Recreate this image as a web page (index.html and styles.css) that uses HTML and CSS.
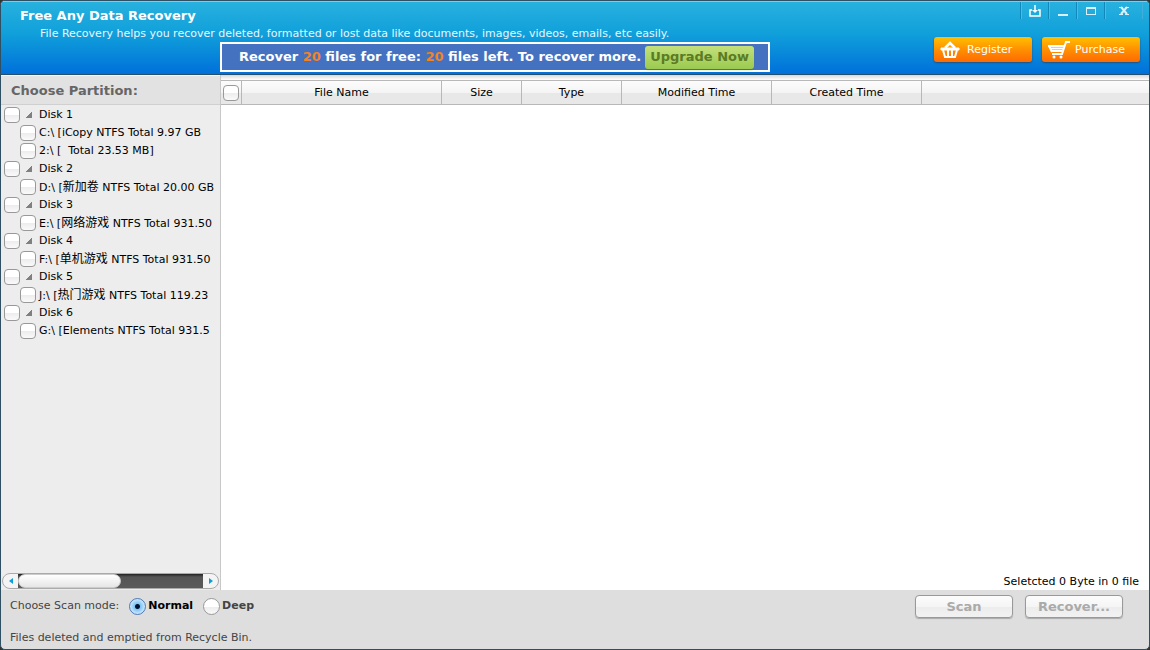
FILE: index.html
```html
<!DOCTYPE html>
<html lang="en">

<head>
    <meta charset="UTF-8">
    <meta name="viewport" content="width=device-width, initial-scale=1.0">
    <title>Free Any Data Recovery</title>
    <link rel="stylesheet" href="styles.css">
</head>

<body>
    <div class="window">
        <header class="header">
            <div class="intro">
                <h1>Free Any Data Recovery</h1>
                <p>File Recovery helps you recover deleted, formatted or lost data like documents, images, videos, emails, etc easily.</p>
                <div class="notice">
                    <span>Recover <em>20</em> files for free: <em>20</em> files left. To recover more.</span>
                    <button type="button" class="upgrade">Upgrade Now</button>
                </div>
            </div>
            <div class="tools">
                <div class="controls">
                    <button type="button" aria-label="Update">
                        <svg width="12" height="12" viewBox="0 0 12 12" fill="none" stroke="#fff"><path d="M3 5H1V11H11V5H9" stroke-width="1.500"/><path d="M6 0V6" stroke-width="1.500"/><path d="M3 5H9L6 8Z" fill="#fff" stroke="none"/></svg>
                    </button>
                    <button type="button" aria-label="Minimize">
                        <svg width="12" height="12" viewBox="0 0 12 12"><path d="M1 9H11V11H1Z" fill="#d8f0fa"/></svg>
                    </button>
                    <button type="button" aria-label="Maximize">
                        <svg width="12" height="12" viewBox="0 0 12 12"><path d="M1 2H11V10H1ZM2 4V9H10V4Z" fill="#d8f0fa" fill-rule="evenodd"/></svg>
                    </button>
                    <button type="button" class="close" aria-label="Close">
                        <svg width="12" height="12" viewBox="0 0 12 12" fill="none" stroke="#d8f0fa"><path d="M3 2L9 9M9 2L3 9" stroke-width="2"/><path d="M1 2.500H5M7 2.500H11M1 9.500H5M7 9.500H11"/></svg>
                    </button>
                </div>
                <div class="orders">
                    <button type="button" class="order">
                        <svg width="20" height="18" viewBox="0 0 20 18" fill="none" stroke="#fff"><path d="M5 7L10 2L15 7" stroke-width="2.500"/><path d="M1 7H19V9H1Z" fill="#fff"/><path d="M3 9L5 16H15L17 9M8 9V16M12 9V16" stroke-width="2"/></svg>
                        Register
                    </button>
                    <button type="button" class="order">
                        <svg width="22" height="18" viewBox="0 0 22 18" fill="none" stroke="#fff"><path d="M22 1H18L14 13H4" stroke-width="2"/><path d="M0 5H16M2 7.500H15M3 10H14" stroke-width="2"/><path d="M1 5L4 11" stroke-width="2"/><circle cx="6" cy="16" r="1.500" fill="#fff" stroke="none"/><circle cx="13" cy="16" r="1.500" fill="#fff" stroke="none"/></svg>
                        Purchase
                    </button>
                </div>
            </div>
        </header>

        <main class="main">
            <aside class="side">
                <h2>Choose Partition:</h2>
                <ul class="tree">
                    <li class="disk"><input type="checkbox" id="d1"><i></i><label for="d1">Disk 1</label></li>
                    <li class="part"><input type="checkbox" id="pc"><label for="pc">C:\ [iCopy NTFS Total 9.97 GB</label></li>
                    <li class="part"><input type="checkbox" id="p2"><label for="p2">2:\ [&nbsp; Total 23.53 MB]</label></li>
                    <li class="disk"><input type="checkbox" id="d2"><i></i><label for="d2">Disk 2</label></li>
                    <li class="part"><input type="checkbox" id="pd"><label for="pd">D:\ [<span class="cjk">新加卷</span> NTFS Total 20.00 GB</label></li>
                    <li class="disk"><input type="checkbox" id="d3"><i></i><label for="d3">Disk 3</label></li>
                    <li class="part"><input type="checkbox" id="pe"><label for="pe">E:\ [<span class="cjk">网络游戏</span> NTFS Total 931.50</label></li>
                    <li class="disk"><input type="checkbox" id="d4"><i></i><label for="d4">Disk 4</label></li>
                    <li class="part"><input type="checkbox" id="pf"><label for="pf">F:\ [<span class="cjk">单机游戏</span> NTFS Total 931.50</label></li>
                    <li class="disk"><input type="checkbox" id="d5"><i></i><label for="d5">Disk 5</label></li>
                    <li class="part"><input type="checkbox" id="pj"><label for="pj">J:\ [<span class="cjk">热门游戏</span> NTFS Total 119.23</label></li>
                    <li class="disk"><input type="checkbox" id="d6"><i></i><label for="d6">Disk 6</label></li>
                    <li class="part"><input type="checkbox" id="pg"><label for="pg">G:\ [Elements NTFS Total 931.5</label></li>
                </ul>
                <div class="scroll">
                    <button type="button" aria-label="Scroll left"><svg width="4" height="6" viewBox="0 0 4 6"><path d="M4 0V6L0 3Z" fill="#0b9fd8"/></svg></button>
                    <div class="track"><div class="thumb"></div></div>
                    <button type="button" aria-label="Scroll right"><svg width="4" height="6" viewBox="0 0 4 6"><path d="M0 0V6L4 3Z" fill="#0b9fd8"/></svg></button>
                </div>
            </aside>

            <section class="files">
                <table>
                    <thead>
                        <tr>
                            <th class="pick"><input type="checkbox" aria-label="Select all"></th>
                            <th class="name">File Name</th>
                            <th class="size">Size</th>
                            <th class="type">Type</th>
                            <th class="time">Modified Time</th>
                            <th class="time">Created Time</th>
                            <th></th>
                        </tr>
                    </thead>
                    <tbody></tbody>
                </table>
                <p class="total">Seletcted 0 Byte in 0 file</p>
            </section>
        </main>

        <footer class="footer">
            <div class="mode">
                <span>Choose Scan mode:</span>
                <input type="radio" name="mode" id="normal" checked><label for="normal" class="on">Normal</label>
                <input type="radio" name="mode" id="deep"><label for="deep">Deep</label>
            </div>
            <div class="actions">
                <button type="button" disabled>Scan</button>
                <button type="button" disabled>Recover...</button>
            </div>
            <p>Files deleted and emptied from Recycle Bin.</p>
        </footer>
    </div>
</body>

</html>
```

FILE: styles.css
```css
* {
    margin: 0;
    padding: 0;
    box-sizing: border-box;
}

body {
    background-color: #333;
    font: 11px/18px "DejaVu Sans", Verdana, "Noto Sans CJK SC", sans-serif;
    color: #000;
}

button,
input {
    font: inherit;
    appearance: none;
}

button {
    border: none;
    background: none;
}

li {
    list-style: none;
}

svg {
    display: block;
    flex: none;
}

.window {
    display: flex;
    flex-direction: column;
    height: 100vh;
    border: 1px solid #2f4f62;
    border-radius: 5px;
    overflow: hidden;
    background-color: #dedede;
}

/* header */
.header {
    display: flex;
    justify-content: space-between;
    height: 74px;
    border-top: 1px solid #7ccdea;
    border-bottom: 1px solid #24506e;
    background: linear-gradient(#27b1de, #109fda 45%, #0070da);
    color: #fff;
}

.intro h1 {
    padding: 4px 0 0 19px;
    font-size: 13px;
    line-height: 20px;
}

.intro p {
    padding-left: 39px;
    line-height: 16px;
    color: #e6f6ff;
}

.notice {
    display: flex;
    align-items: center;
    width: 550px;
    height: 30px;
    margin-left: 219px;
    padding-left: 17px;
    border: 2px solid #fff;
    background-color: #4472c0;
    font-size: 13px;
    font-weight: bold;
    white-space: nowrap;
}

.notice em {
    font-style: normal;
    color: #f5821f;
}

.upgrade {
    height: 23px;
    margin-left: 4px;
    padding: 0 5px;
    border-radius: 3px;
    background: linear-gradient(#c3e07c, #9bca50);
    box-shadow: 0 1px 1px #4a7a50;
    color: #5b7b26;
}

.tools {
    display: flex;
    flex-direction: column;
    align-items: flex-end;
    gap: 18px;
}

.controls {
    display: flex;
    height: 17px;
    margin-right: 6px;
    border-right: 1px solid #3fb0dc;
}

.controls button {
    display: flex;
    justify-content: center;
    align-items: center;
    width: 28px;
    border-left: 1px solid #1288b8;
    box-shadow: inset 1px 0 #4abce2;
}

.controls .close {
    width: 38px;
}

.orders {
    display: flex;
    gap: 10px;
    padding-right: 9px;
}

.order {
    display: flex;
    align-items: center;
    gap: 7px;
    width: 98px;
    height: 25px;
    padding-left: 6px;
    border-radius: 3px;
    background: linear-gradient(#ffc000, #ff9000 50%, #ff6a00);
    box-shadow: 0 1px 2px #1f4f80;
    color: #fff;
}

.order + .order {
    gap: 5px;
}

/* partitions and file list */
.main {
    display: flex;
    flex: 1;
    min-height: 0;
}

.side {
    display: flex;
    flex-direction: column;
    width: 220px;
    border-right: 1px solid #c8c8c8;
    background-color: #ededed;
}

.side h2 {
    height: 30px;
    padding-left: 10px;
    border-top: 1px solid #f5f5f5;
    border-bottom: 1px solid #d0d0d0;
    background-color: #e2e2e2;
    font-size: 13px;
    line-height: 29px;
    color: #666;
}

.tree {
    flex: 1;
    padding-top: 1px;
    overflow: hidden;
}

.tree li {
    display: flex;
    align-items: center;
    height: 18px;
    padding-left: 3px;
    white-space: nowrap;
}

.tree .part {
    padding-left: 19px;
}

.part label {
    padding-left: 3px;
}

.cjk {
    font-size: 12px;
}

.disk i {
    width: 6px;
    height: 6px;
    margin: 0 7px 0 6px;
    background: linear-gradient(to bottom right, transparent 50%, #808080 50%);
}

input[type="checkbox"] {
    flex: none;
    width: 16px;
    height: 16px;
    border: 1px solid #999;
    border-radius: 4px;
    background: linear-gradient(#fff 50%, #ececec 50%, #fafafa);
}

.scroll {
    display: flex;
    height: 16px;
    margin: 0 1px 1px;
    border: 1px solid #aaa;
    border-radius: 8px;
    overflow: hidden;
    background-color: #f4f4f4;
}

.scroll button {
    display: flex;
    justify-content: center;
    align-items: center;
    width: 15px;
}

.track {
    flex: 1;
    background: linear-gradient(#222, #555 3px, #5a5a5a);
}

.thumb {
    width: 103px;
    height: 14px;
    border: 1px solid #ccc;
    border-radius: 7px;
    background: linear-gradient(#fff, #e6e6e6);
}

.files {
    display: flex;
    flex: 1;
    flex-direction: column;
    justify-content: space-between;
    padding-top: 5px;
    background: linear-gradient(#d8d8d8, #fff 5px);
}

table {
    width: 100%;
    table-layout: fixed;
    border-spacing: 0;
}

th {
    height: 25px;
    border: 1px solid #b8b8b8;
    border-left: none;
    background: linear-gradient(#fcfcfc, #f4f4f4 50%, #e8e8e8 50%);
    font-weight: normal;
}

th:last-child {
    border-right: none;
}

.pick {
    width: 21px;
}

.pick input {
    display: block;
    margin: 0 auto;
}

.name {
    width: 200px;
}

.size {
    width: 80px;
}

.type {
    width: 100px;
}

.time {
    width: 150px;
}

.total {
    padding-right: 10px;
    line-height: 16px;
    text-align: right;
}

/* footer */
.footer {
    display: grid;
    grid-template-columns: 1fr auto;
    row-gap: 8px;
    height: 59px;
    padding: 5px 26px 0 9px;
    color: #444;
}

.mode {
    display: flex;
    align-items: center;
    height: 22px;
}

.mode input {
    width: 17px;
    height: 17px;
    margin: 0 2px 0 10px;
    border: 1px solid #999;
    border-radius: 50%;
    background: linear-gradient(#fff 50%, #ececec 50%, #fafafa);
}

.mode input:checked {
    border-color: #5078b0;
    background: radial-gradient(circle, #001030 2px, #7fc4f5 3px, #d4edff 8px);
}

.mode label {
    font-weight: bold;
}

.mode .on {
    color: #000;
}

.actions {
    display: flex;
    gap: 12px;
}

.actions button {
    width: 98px;
    height: 23px;
    border: 1px solid #999;
    border-radius: 4px;
    background: linear-gradient(#fcfcfc, #f5f5f5 50%, #ececec 50%, #f2f2f2);
    box-shadow: 0 1px 1px #aaa;
    font-size: 13px;
    font-weight: bold;
    color: #aaa;
}
```
